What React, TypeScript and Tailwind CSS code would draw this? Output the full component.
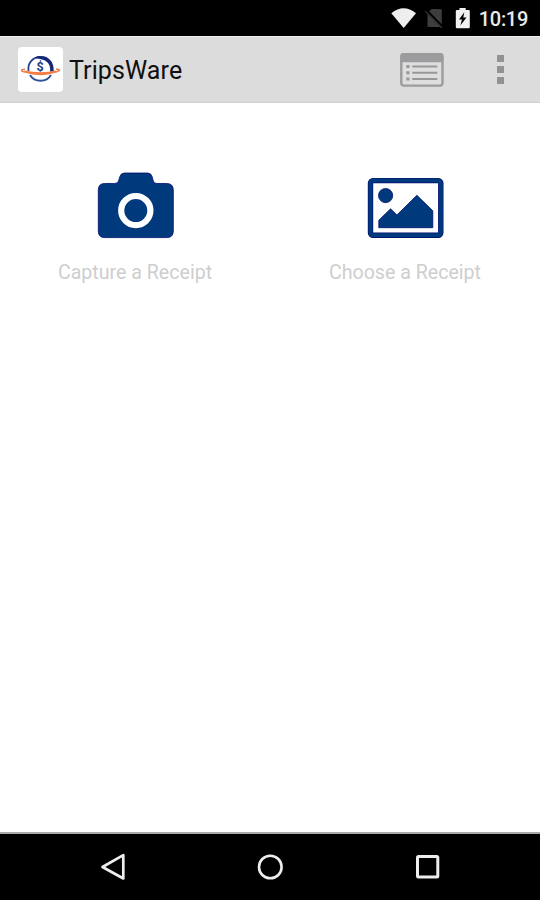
import React from "react";

function StatusBar() {
  return (
    <div className="flex h-9 shrink-0 items-start justify-end bg-black pr-[12px]">
      <svg className="mt-[7px] h-[22px] w-[26px]" viewBox="391 7 26 22">
        <path d="M391.3 13.2 Q403.6 3.4 416 13.2 L403.7 28 Z" fill="#eee" />
      </svg>
      <svg className="ml-[8px] mt-[7px] h-[22px] w-[20px]" viewBox="425 7 20 22">
        <path d="M431.5 9 H440.3 Q441.8 9 441.8 10.5 V27 H427.5 V13 Z" fill="#3d3d3d" />
        <path d="M426 9.8 L443.5 27.5" stroke="#000" strokeWidth="2.2" />
        <path d="M425.3 11.2 L442 28" stroke="#333" strokeWidth="1.2" />
      </svg>
      <svg className="ml-[10px] mt-[7px] h-[22px] w-[16px]" viewBox="455 7 16 22">
        <path d="M459.5 8 H465.7 V10 H468.7 Q469.8 10 469.8 11.2 V27 Q469.8 28.2 468.7 28.2 H457 Q455.8 28.2 455.8 27 V11.2 Q455.8 10 457 10 H459.5 Z" fill="#f1f1f1" />
        <path d="M464.3 12.2 L459 19.6 H462 L460.3 25.5 L466.5 17.6 H463.3 Z" fill="#000" />
      </svg>
      <span className="ml-[8px] mt-[7px] whitespace-nowrap text-[20px] leading-[24px] font-medium tracking-[-0.3px] text-[#e9e9e9]">10:19</span>
    </div>
  );
}

function Logo() {
  return (
    <div className="h-[45px] w-[45px] rounded-[4px] bg-white">
      <svg className="h-full w-full" viewBox="18 47 45 45">
        <path d="M28.6 71 A11.8 11.8 0 0 1 40.3 56.9" fill="none" stroke="#26428c" strokeWidth="1.8" />
        <path d="M35 57.5 C45 53 54.5 60 53.7 71 L50.1 71.8 C51 63 46 58.8 35 58.2 Z" fill="#14277a" />
        <path d="M30 75 C34.5 82.6 46.5 82.6 51 75" fill="none" stroke="#2d4f94" strokeWidth="1.9" />
        <text x="40.2" y="70.7" textAnchor="middle" fontSize="12.5" fontWeight="700" fill="#233b88">$</text>
        <path d="M25 69.3 C20.5 69.2 20.5 71 24.5 71.9 C35 75.2 46 75.2 56 71.9 C60.5 70.8 60.5 69 56 69.3 M24.5 71.2 C35 73.6 46 73.6 56 71.2" fill="none" stroke="#f47c43" strokeWidth="1.5" />
      </svg>
    </div>
  );
}

function Toolbar() {
  return (
    <header className="flex h-[67px] shrink-0 items-center border-t border-b border-t-[#f0f0f0] border-b-[#d0d0d0] bg-[#dcdcdc] pl-[18px] pr-[36px]">
      <Logo />
      <h1 className="ml-[6px] mt-[2px] whitespace-nowrap text-[25px] leading-[30px] font-normal tracking-[0.1px] text-[#101010]">TripsWare</h1>
      <svg className="ml-auto h-[34px] w-[44px]" viewBox="400 53 44 34">
        <rect x="401.3" y="54" width="41.2" height="31.6" rx="2.5" fill="#dedede" stroke="#9c9c9e" strokeWidth="2.4" />
        <path d="M400.5 62.3 V56 Q400.5 53 403.5 53 H440.3 Q443.3 53 443.3 56 V62.3 Z" fill="#9c9c9e" />
        <path d="M412.3 66.6 H437.3 M412.3 72.8 H437.3 M412.3 79 H437.3" stroke="#98989a" strokeWidth="2" />
        <path d="M406.3 66.6 H409.5 M406.3 72.8 H409.5 M406.3 79 H409.5" stroke="#98989a" strokeWidth="3" />
      </svg>
      <div className="ml-[52px] flex w-[8px] flex-col items-center gap-[4px]">
        <i className="size-[7px] bg-[#929292]" />
        <i className="size-[7px] bg-[#929292]" />
        <i className="size-[7px] bg-[#929292]" />
      </div>
    </header>
  );
}

function CameraIcon() {
  return (
    <svg className="h-[70px] w-[80px]" viewBox="96 170 80 70">
      <path d="M104.5 183.5 H114.5 Q117.7 183.5 118.5 181 L120 176.3 Q121.2 173 124.5 173 H147.5 Q150.8 173 152 176.3 L153.3 181 Q154 183.5 157 183.5 H166.8 Q173.3 183.5 173.3 190 V231 Q173.3 237.6 166.8 237.6 H104.8 Q98.3 237.6 98.3 231 V190 Q98.3 183.5 104.5 183.5 Z" fill="#003a7d" stroke="#020c70" strokeWidth="0.8" />
      <circle cx="135.8" cy="210.6" r="14.6" fill="#003a7d" stroke="#fff" strokeWidth="6.2" />
    </svg>
  );
}

function PictureIcon() {
  return (
    <svg className="h-[70px] w-[80px]" viewBox="366 170 80 70">
      <rect x="370.5" y="180.6" width="70.3" height="54.7" rx="2.5" fill="#fff" stroke="#020c70" strokeWidth="5.4" />
      <rect x="370.5" y="180.6" width="70.3" height="54.7" rx="2.5" fill="none" stroke="#003a7d" strokeWidth="4" />
      <circle cx="385.6" cy="195.6" r="7.1" fill="#003a7d" stroke="#020c70" strokeWidth="0.8" />
      <path d="M378.8 220.3 L390.6 208.8 L396.9 215 L416.9 195.3 L432.8 210.8 V227.7 H378.8 Z" fill="#003a7d" stroke="#020c70" strokeWidth="0.8" />
    </svg>
  );
}

function Action({ label, children }: { label: string; children: React.ReactNode }) {
  return (
    <button className="flex flex-1 flex-col items-center pt-[67px]">
      <span className="ml-[2px]">{children}</span>
      <span className="mt-[21px] whitespace-nowrap text-[19.6px] leading-[24px] text-[#cecece]">{label}</span>
    </button>
  );
}

function NavBar() {
  return (
    <nav className="flex h-[68px] shrink-0 items-center border-t-2 border-[#a8a8a8] bg-black pl-[98px]">
      <svg className="h-[30px] w-[30px]" viewBox="98 852 30 30" fill="none" stroke="#eeeeee" strokeWidth="2.7" strokeLinejoin="round">
        <path d="M102.5 867 L123.3 855.2 V878.5 Z" />
      </svg>
      <svg className="ml-[127px] h-[30px] w-[30px]" viewBox="255 852 30 30" fill="none" stroke="#eeeeee" strokeWidth="2.6">
        <circle cx="270.3" cy="867" r="11.3" />
      </svg>
      <svg className="ml-[127px] h-[30px] w-[30px]" viewBox="412 852 30 30" fill="none" stroke="#eeeeee" strokeWidth="3">
        <rect x="417.5" y="856.5" width="20.3" height="20.6" rx="1" />
      </svg>
    </nav>
  );
}

export default function App() {
  return (
    <div className="flex h-[900px] w-[540px] flex-col overflow-hidden bg-white font-[Roboto,sans-serif]">
      <StatusBar />
      <Toolbar />
      <main className="flex flex-1 items-start">
        <Action label="Capture a Receipt"><CameraIcon /></Action>
        <Action label="Choose a Receipt"><PictureIcon /></Action>
      </main>
      <NavBar />
    </div>
  );
}
